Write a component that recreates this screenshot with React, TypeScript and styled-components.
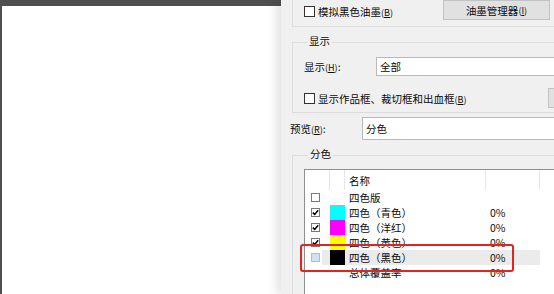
import React from "react";
import styled, { createGlobalStyle } from "styled-components";

const Global = createGlobalStyle`
  html, body { margin: 0; padding: 0; background: #f0f0f0; overflow: hidden; }
  #root { width: 554px; height: 294px; }
`;

const Root = styled.div`
  position: relative;
  display: flex;
  width: 554px;
  height: 294px;
  overflow: hidden;
  font-family: "Noto Sans CJK SC", "Noto Sans", sans-serif;
  font-size: 10.5px;
  color: #0a0a0a;
`;

const Canvas = styled.div`
  width: 281px;
  flex-shrink: 0;
  box-sizing: border-box;
  border-top: 6px solid #4f4f4f;
  border-left: 2px solid #4f4f4f;
  background: #fff;
`;

const Dialog = styled.div`
  position: relative;
  z-index: 1;
  flex: 1;
  min-width: 0;
  display: flex;
  flex-direction: column;
  align-items: flex-start;
  background: #f0f0f0;
  box-shadow: -5px 0 9px rgba(0, 0, 0, 0.11);
  overflow: hidden;
`;

const Group = styled.div<{ $top: number; $padTop?: number; $padBottom: number }>`
  flex-shrink: 0;
  box-sizing: border-box;
  width: 290px;
  margin-left: 11px;
  margin-top: ${(p) => p.$top}px;
  padding: ${(p) => p.$padTop ?? 0}px 0 ${(p) => p.$padBottom}px 11px;
  border: 1px solid #dcdcdc;
`;

const GroupTitle = styled.div<{ $indent: number }>`
  width: fit-content;
  margin: -9px 0 0 ${(p) => p.$indent - 11}px;
  padding: 0 2px;
  line-height: 13px;
  background: #f0f0f0;
`;

const Row = styled.div<{ $cols: string; $top: number; $h: number }>`
  display: grid;
  grid-template-columns: ${(p) => p.$cols};
  align-items: center;
  margin-top: ${(p) => p.$top}px;
  height: ${(p) => p.$h}px;
`;

const CheckLabel = styled.label<{ $shift?: number }>`
  display: flex;
  align-items: center;
  gap: 3px;
  white-space: nowrap;
  margin-top: ${(p) => p.$shift ?? 0}px;
`;

const Box = styled.span`
  width: 11px;
  height: 11px;
  box-sizing: border-box;
  border: 1px solid #333;
  background: #fff;
`;

const Mn = styled.span`
  font-size: 9px;
  & u { text-underline-offset: 1px; }
`;

const Button = styled.div<{ $w: number }>`
  box-sizing: border-box;
  width: ${(p) => p.$w}px;
  height: 20px;
  display: flex;
  align-items: center;
  justify-content: center;
  white-space: nowrap;
  background: #e1e1e1;
  border: 1px solid #c2c2c2;
`;

const Input = styled.div<{ $h: number }>`
  box-sizing: border-box;
  width: 220px;
  height: ${(p) => p.$h}px;
  display: flex;
  align-items: center;
  padding-left: 3px;
  background: #fff;
  border: 1px solid #b9b9b9;
`;

const Label = styled.span`
  white-space: nowrap;
`;

const PreviewRow = styled(Row)`
  margin-left: 9px;
`;

const List = styled.div`
  box-sizing: border-box;
  width: 280px;
  height: 140px;
  margin-top: 9px;
  background: #fff;
  border: 1px solid #8e8e8e;
`;

const COLS = "25px 15px 141px 54px 1fr";

const Header = styled.div`
  display: grid;
  grid-template-columns: ${COLS};
  height: 20px;
`;

const HeadCell = styled.div`
  display: flex;
  align-items: center;
  padding-left: 4px;
  border-right: 1px solid #e6e6e6;
`;

const ItemRow = styled.div<{ $selected?: boolean }>`
  display: grid;
  grid-template-columns: ${COLS};
  height: 15px;
  background: ${(p) =>
    p.$selected ? "linear-gradient(#ebebeb, #ebebeb) 17px 0 / 218px 100% no-repeat" : "none"};
`;

const CheckCell = styled.div`
  display: flex;
  align-items: center;
  padding-left: 6px;
`;

const SmallBox = styled.span<{ $selected?: boolean }>`
  display: flex;
  width: 9px;
  height: 9px;
  box-sizing: border-box;
  border: 1px solid ${(p) => (p.$selected ? "#9fc0df" : "#7a7a7a")};
  background: ${(p) => (p.$selected ? "#cfe2f3" : "#fff")};
`;

const Swatch = styled.div<{ $c: string }>`
  background: ${(p) => p.$c};
`;

const TextCell = styled.div`
  display: flex;
  align-items: center;
  padding-left: 4px;
  white-space: nowrap;
  line-height: 15px;
`;

const Annotation = styled.div`
  position: absolute;
  left: 300px;
  top: 244px;
  width: 214px;
  height: 28px;
  box-sizing: border-box;
  border: 2px solid #e2231e;
  border-radius: 3px;
  z-index: 5;
  pointer-events: none;
`;

const Check = () => (
  <svg width="7" height="7" viewBox="0 0 7 7">
    <path d="M0.8 3.6 L2.7 5.4 L6.2 1.2" fill="none" stroke="#000" strokeWidth="1.5" />
  </svg>
);

type Item = { name: string; color?: string; checked?: boolean; box: boolean; pct?: string; selected?: boolean };

const items: Item[] = [
  { name: "四色版", box: true },
  { name: "四色（青色）", color: "#00ffff", checked: true, box: true, pct: "0%" },
  { name: "四色（洋红）", color: "#ff00ff", checked: true, box: true, pct: "0%" },
  { name: "四色（黄色）", color: "#ffff00", checked: true, box: true, pct: "0%" },
  { name: "四色（黑色）", color: "#000000", box: true, pct: "0%", selected: true },
  { name: "总体覆盖率", box: false, pct: "0%" },
];

export default function App() {
  return (
    <Root>
      <Global />
      <Canvas />
      <Dialog>
        <Group $top={-8} $padTop={7} $padBottom={6}>
          <Row $cols="139px 107px" $top={0} $h={20}>
            <CheckLabel $shift={3}>
              <Box />
              <span>
                模拟黑色油墨<Mn>(<u>B</u>)</Mn>
              </span>
            </CheckLabel>
            <Button $w={107}>
              油墨管理器<Mn>(<u>I</u>)</Mn>
            </Button>
          </Row>
        </Group>

        <Group $top={15} $padBottom={4}>
          <GroupTitle $indent={14}>显示</GroupTitle>
          <Row $cols="72px 1fr" $top={10} $h={19}>
            <Label>
              显示<Mn>(<u>H</u>)</Mn>:
            </Label>
            <Input $h={19}>全部</Input>
          </Row>
          <Row $cols="244px 60px" $top={12} $h={20}>
            <CheckLabel>
              <Box />
              <span>
                显示作品框、裁切框和出血框<Mn>(<u>B</u>)</Mn>
              </span>
            </CheckLabel>
            <Button $w={60} />
          </Row>
        </Group>

        <PreviewRow $cols="72px 1fr" $top={4} $h={23}>
          <Label>
            预览<Mn>(<u>R</u>)</Mn>:
          </Label>
          <Input $h={23}>分色</Input>
        </PreviewRow>

        <Group $top={15} $padBottom={0}>
          <GroupTitle $indent={15}>分色</GroupTitle>
          <List>
            <Header>
              <HeadCell />
              <HeadCell />
              <HeadCell>名称</HeadCell>
              <HeadCell />
              <HeadCell />
            </Header>
            {items.map((it) => (
              <ItemRow key={it.name} $selected={it.selected}>
                <CheckCell>
                  {it.box && <SmallBox $selected={it.selected}>{it.checked && <Check />}</SmallBox>}
                </CheckCell>
                <Swatch $c={it.color ?? "transparent"} />
                <TextCell>{it.name}</TextCell>
                <TextCell>{it.pct}</TextCell>
                <div />
              </ItemRow>
            ))}
          </List>
        </Group>
      </Dialog>
      <Annotation />
    </Root>
  );
}
